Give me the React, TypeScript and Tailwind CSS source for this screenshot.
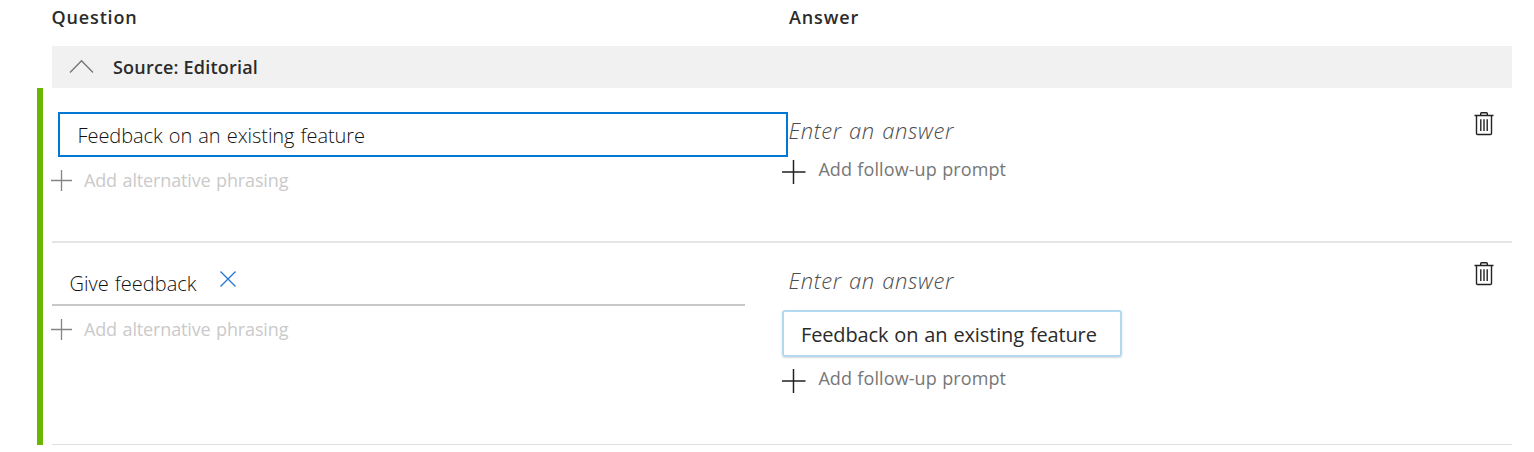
import React from "react";

function Plus({ className, size, width = 1.5 }: { className: string; size: number; width?: number }) {
  return (
    <svg className={className} width={size} height={size} viewBox="0 0 24 24" fill="none" stroke="currentColor" strokeWidth={width}>
      <path d="M0 12H24M12 0V24" />
    </svg>
  );
}

function Trash() {
  return (
    <svg className="mr-[18px] ml-auto block h-6 w-5 shrink-0 text-[#222]" viewBox="0 0 20 24" fill="none" stroke="currentColor" strokeWidth="1.4">
      <path d="M0.5 3.5H19.5M6.7 3.3V1.5Q6.7 .7 7.5 .7H12.5Q13.3 .7 13.3 1.5V3.3M2.5 3.8V21.4Q2.5 22.5 3.6 22.5H16.4Q17.5 22.5 17.5 21.4V3.8M6.8 7.2V19M10 7.2V19M13.2 7.2V19" />
    </svg>
  );
}

function AddPhrasing() {
  return (
    <button className="flex h-6 items-center">
      <Plus className="-ml-px text-[#858585]" size={21} />
      <span className="ml-3 text-[18px] leading-6 tracking-[-0.14px] whitespace-nowrap text-[#cacaca] [word-spacing:1px]">Add alternative phrasing</span>
    </button>
  );
}

function AddPrompt() {
  return (
    <button className="-ml-1.5 flex h-6 items-start">
      <svg className="mt-[3px] text-[#222]" width="24" height="24" viewBox="0 0 24 24" fill="none" stroke="currentColor" strokeWidth="1.5">
        <path d="M0 12H23.5M11.5 0V24" />
      </svg>
      <span className="ml-[12.4px] text-[18px] leading-6 tracking-[0.1px] whitespace-nowrap text-[#777] [word-spacing:0.5px]">Add follow-up prompt</span>
    </button>
  );
}

function AnswerPlaceholder() {
  return <div className="h-8 pl-[0.5px] text-[22px] leading-8 font-light tracking-[0.6px] whitespace-nowrap text-[#4c4c4c] italic [word-spacing:1px]">Enter an answer</div>;
}

export default function App() {
  return (
    <div className="h-[452px] w-full overflow-hidden bg-white font-['Open_Sans','Noto_Sans',sans-serif] text-[#2b2b2b]">
      <div className="flex h-[46px] pl-[51.5px] text-[18px] leading-[34px] font-semibold">
        <div className="w-[737.5px] tracking-[0.85px]">Question</div>
        <div className="tracking-[0.85px]">Answer</div>
      </div>
      <div className="mr-[22px] ml-[52px] flex h-[42px] items-center bg-[#f1f1f1] pl-[17px]">
        <svg className="h-4 w-[25px] text-[#777]" viewBox="0 0 25 16" fill="none" stroke="currentColor" strokeWidth="1.4">
          <path d="M1 13.5L12.5 1.8L24 13.5" />
        </svg>
        <div className="ml-[19px] text-[18px] leading-6 font-semibold tracking-[0.2px]">Source: Editorial</div>
      </div>
      <div className="mr-[22px] ml-[37px] h-[357px] border-l-[6px] border-[#6bb700] pl-[9px]">
        <div className="flex h-[155px] border-b-2 border-[#e5e5e5] pt-6">
          <div className="w-[736px] shrink-0">
            <div className="mb-[11px] ml-1.5 flex h-[45px] items-center border-2 border-[#0078d4] pl-[17.5px]">
              <span className="mt-[3px] text-[20px] leading-6 font-light tracking-[-0.06px] whitespace-nowrap text-[#111] [word-spacing:1px]">Feedback on an existing feature</span>
            </div>
            <AddPhrasing />
          </div>
          <div className="pt-0.5">
            <AnswerPlaceholder />
            <div className="pt-[11px]"><AddPrompt /></div>
          </div>
          <Trash />
        </div>
        <div className="flex h-[202px] border-b border-[#e1e1e1] pt-[19px]">
          <div className="w-[736px] shrink-0">
            <div className="mb-[11px] flex h-11 w-[693px] items-start border-b-2 border-[#c8c8c8] pl-[17.5px]">
              <span className="mt-[10px] w-[150.5px] text-[20px] leading-6 font-light whitespace-nowrap text-[#111] [word-spacing:1px]">Give feedback</span>
              <svg className="mt-[9px] h-4 w-4 text-[#2374d5]" viewBox="0 0 16 16" fill="none" stroke="currentColor" strokeWidth="1.3">
                <path d="M.5 .5L15.5 15.5M15.5 .5L.5 15.5" />
              </svg>
            </div>
            <AddPhrasing />
          </div>
          <div className="pt-0.5">
            <AnswerPlaceholder />
            <div className="mt-[14px] -ml-1.5 flex h-[47px] w-[340px] items-center rounded-[3px] border-2 border-[#b3d9f1] pl-[17px] shadow-[0_1px_2px_rgba(0,0,0,0.15)]">
              <span className="mt-0.5 text-[20px] leading-6 tracking-[-0.15px] whitespace-nowrap [word-spacing:1px]">Feedback on an existing feature</span>
            </div>
            <div className="pt-[9px]"><AddPrompt /></div>
          </div>
          <Trash />
        </div>
      </div>
    </div>
  );
}
